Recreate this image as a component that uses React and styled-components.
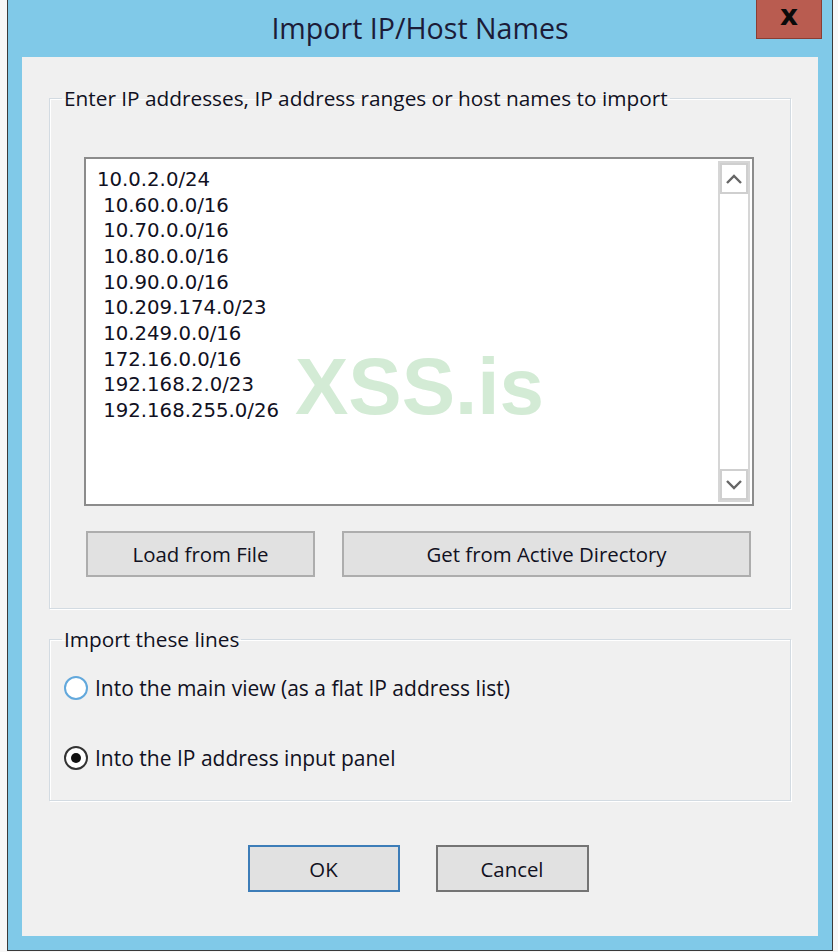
import styled, { createGlobalStyle } from "styled-components";

const GlobalStyle = createGlobalStyle`
  html, body { margin: 0; padding: 0; }
  body {
    background: #f7f7f7;
    font-family: "Open Sans", "Noto Sans", sans-serif;
    color: #111122;
  }
`;

const Desktop = styled.div`
  width: 838px;
  height: 952px;
  padding-left: 7px;
  box-sizing: border-box;
  display: flex;
  overflow: hidden;
`;

const Window = styled.div`
  width: 826px;
  height: 951px;
  box-sizing: border-box;
  border: 1px solid #3a3a3a;
  border-top: none;
  background: #80c9e8;
  display: flex;
  flex-direction: column;
`;

const TitleBar = styled.div`
  height: 57px;
  flex-shrink: 0;
  display: grid;
  grid-template-columns: 1fr auto 1fr;
`;

const Title = styled.div`
  grid-column: 2;
  align-self: center;
  font-size: 28.6px;
  line-height: 40px;
  color: #1c1c38;
  margin-top: -2px;
`;

const CloseButton = styled.div`
  grid-column: 3;
  justify-self: end;
  align-self: start;
  margin-right: 10px;
  width: 66px;
  height: 39px;
  box-sizing: border-box;
  background: #b95c50;
  border: 1px solid #8a3d33;
  border-top: none;
  display: flex;
  align-items: center;
  justify-content: center;
  font-family: "DejaVu Sans", sans-serif;
  font-weight: 700;
  font-size: 28px;
  line-height: 1;
  color: #0a0a0a;
  padding-bottom: 6px;
`;

const Client = styled.div`
  flex: 1;
  margin: 0 14px 14px 14px;
  background: #f0f0f0;
  padding: 29px 27px 0 27px;
  display: flex;
  flex-direction: column;
`;

const Group = styled.fieldset`
  margin: ${(p) => p.$top || 0}px 0 0 0;
  padding: 0;
  border: 1px solid #d3dbe2;
  box-shadow: inset 1px 1px 0 #ffffff, 1px 1px 0 #ffffff;
  min-width: 0;
`;

const Legend = styled.legend`
  margin-left: 12px;
  padding: 0 2px;
  font-size: 20.8px;
  line-height: 24px;
  color: #111122;
`;

const GroupBody = styled.div`
  padding: ${(p) => p.$pad};
  display: flex;
  flex-direction: column;
`;

const TextBox = styled.div`
  position: relative;
  height: 349px;
  box-sizing: border-box;
  border: 2px solid #8c8c8c;
  background: #ffffff;
  display: flex;
`;

const Lines = styled.div`
  flex: 1;
  padding: 8px 11px;
  font-family: "DejaVu Sans", sans-serif;
  font-size: 19.7px;
  line-height: 25.67px;
  white-space: pre;
  color: #111122;
`;

const Watermark = styled.div`
  position: absolute;
  left: 209px;
  top: 188px;
  font-family: "Liberation Sans", Arial, sans-serif;
  font-weight: 700;
  font-size: 80px;
  line-height: 1;
  color: #d3ebd5;
  pointer-events: none;
`;

const ScrollBar = styled.div`
  width: 32px;
  margin: 2px 2px 2px 0;
  box-sizing: border-box;
  border: 2px solid #d6d6d6;
  display: flex;
  flex-direction: column;
`;

const ArrowBox = styled.div`
  height: 31px;
  box-sizing: border-box;
  border: 2px solid #cfcfcf;
  display: flex;
  align-items: center;
  justify-content: center;
  background: #fff;
`;

const Track = styled.div`
  flex: 1;
  background: #ffffff;
`;

const ButtonRow = styled.div`
  margin-top: 25px;
  padding-left: 2px;
  display: flex;
  gap: 27px;
`;

const Button = styled.div`
  width: ${(p) => p.$w}px;
  height: ${(p) => p.$h || 46}px;
  box-sizing: border-box;
  background: #e1e1e1;
  border: 2px solid ${(p) => p.$border || "#adadad"};
  display: flex;
  align-items: center;
  justify-content: center;
  font-size: 20.4px;
  color: #111122;
`;

const RadioList = styled.div`
  display: flex;
  flex-direction: column;
  gap: 40px;
`;

const RadioRow = styled.div`
  height: 30px;
  display: flex;
  align-items: center;
  gap: 7px;
  font-size: 21px;
`;

const RadioCircle = styled.div`
  width: 24px;
  height: 24px;
  flex-shrink: 0;
  box-sizing: border-box;
  border-radius: 50%;
  border: 2px solid ${(p) => (p.$checked ? "#333333" : "#62a8dc")};
  background: #ffffff;
  display: flex;
  align-items: center;
  justify-content: center;
  &::after {
    content: "";
    width: 10px;
    height: 10px;
    border-radius: 50%;
    background: ${(p) => (p.$checked ? "#111111" : "transparent")};
  }
`;

const Footer = styled.div`
  margin-top: 44px;
  padding-right: 4px;
  display: flex;
  justify-content: center;
  gap: 36px;
`;

const Chevron = ({ up }) => (
  <svg width="18" height="12" viewBox="0 0 18 12">
    <polyline
      points={up ? "2,10 9,3 16,10" : "2,2 9,9 16,2"}
      fill="none"
      stroke="#666"
      strokeWidth="2.4"
    />
  </svg>
);

const ranges = [
  "10.0.2.0/24",
  " 10.60.0.0/16",
  " 10.70.0.0/16",
  " 10.80.0.0/16",
  " 10.90.0.0/16",
  " 10.209.174.0/23",
  " 10.249.0.0/16",
  " 172.16.0.0/16",
  " 192.168.2.0/23",
  " 192.168.255.0/26",
];

export default function App() {
  return (
    <>
      <GlobalStyle />
      <Desktop>
        <Window>
          <TitleBar>
            <Title>Import IP/Host Names</Title>
            <CloseButton>x</CloseButton>
          </TitleBar>
          <Client>
            <Group>
              <Legend>Enter IP addresses, IP address ranges or host names to import</Legend>
              <GroupBody $pad="47px 36px 31px 34px">
                <TextBox>
                  <Lines>{ranges.join("\n")}</Lines>
                  <ScrollBar>
                    <ArrowBox><Chevron up /></ArrowBox>
                    <Track />
                    <ArrowBox><Chevron /></ArrowBox>
                  </ScrollBar>
                  <Watermark>XSS.is</Watermark>
                </TextBox>
                <ButtonRow>
                  <Button $w={229}>Load from File</Button>
                  <Button $w={409}>Get from Active Directory</Button>
                </ButtonRow>
              </GroupBody>
            </Group>
            <Group $top={18}>
              <Legend>Import these lines</Legend>
              <GroupBody $pad="22px 14px 27px 14px">
                <RadioList>
                  <RadioRow>
                    <RadioCircle />
                    Into the main view (as a flat IP address list)
                  </RadioRow>
                  <RadioRow>
                    <RadioCircle $checked />
                    Into the IP address input panel
                  </RadioRow>
                </RadioList>
              </GroupBody>
            </Group>
            <Footer>
              <Button $w={152} $h={47} $border="#3d7db8">OK</Button>
              <Button $w={153} $h={47} $border="#747474">Cancel</Button>
            </Footer>
          </Client>
        </Window>
      </Desktop>
    </>
  );
}
